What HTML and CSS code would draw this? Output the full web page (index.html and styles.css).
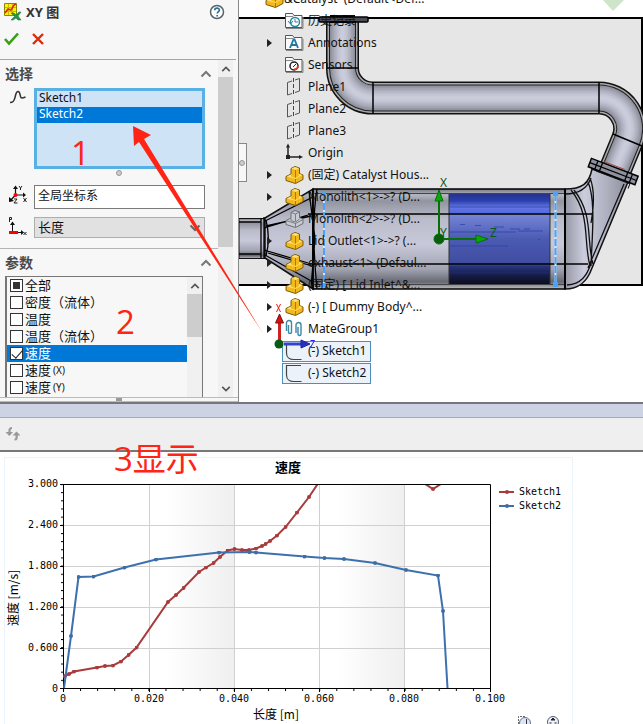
FILE: index.html
```html
<!DOCTYPE html>
<html lang="zh-CN">
<head>
<meta charset="utf-8">
<title>XY 图</title>
<link rel="stylesheet" href="styles.css">
</head>
<body>
<svg class="defs" aria-hidden="true">
  <symbol id="part" viewBox="0 0 20 20">
    <path d="M2 11.500 7 9V3.500L11 1.500l4.500 1.500v5.500l3.500 1.500v4.500L11.500 18.500 2 15.500z" fill="#f2b91c" stroke="#7c5a05"/>
    <path d="M7.500 3.500 11 2l4 1.300-3.300 1.800zM2.800 11.500 7 9.500v2l4 1.500 4-2v-2l3.500 1-7 3.800z" fill="#ffe07a"/>
    <path d="M11.500 5v7.500M11.500 14v4" fill="none" stroke="#a87a09"/>
  </symbol>
  <symbol id="ghost" viewBox="0 0 20 20">
    <path d="M2 11.500 7 9V3.500L11 1.500l4.500 1.500v5.500l3.500 1.500v4.500L11.500 18.500 2 15.500z" fill="#c9cbd2" stroke="#6d6f74"/>
    <path d="M7 3.500 11.500 5l4-2M11.500 5v7.500M7 9.500v2l4.500 1.500 4-3M2 11.500l9.500 3 7.500-4M11.500 14v4" fill="none" stroke="#7b7d82"/>
  </symbol>
  <symbol id="plane" viewBox="0 0 20 20">
    <path d="M8 4 3.500 5.500V18L8 16.500M11 3l4.500-1.500V14L11 15.500" fill="none" stroke="#555"/>
    <path d="M9.500 1v18" stroke="#444" stroke-dasharray="4 2"/>
  </symbol>
  <symbol id="folder" viewBox="0 0 20 20">
    <path d="M1.500 16.500v-14h7l1.500 2h8v12z" fill="#fafafa" stroke="#555"/>
    <path d="M2 5.500h7l1-1M2 17.500h17V6" fill="none" stroke="#888"/>
  </symbol>
  <symbol id="chev-up" viewBox="0 0 12 8"><path d="M1.500 6.500 6 2l4.500 4.500" fill="none" stroke="currentColor" stroke-width="2"/></symbol>
  <symbol id="chev-down" viewBox="0 0 12 8"><path d="M1.500 1.500 6 6l4.500-4.500" fill="none" stroke="currentColor" stroke-width="2"/></symbol>
</svg>

<div class="app">
  <div class="workspace">
    <aside class="panel">
      <header class="panel-head">
        <div class="title-row">
          <svg width="18" height="18" viewBox="0 0 18 18" aria-hidden="true">
            <path d="M.5.500h12v12H.500z" fill="#fff200" stroke="#8a8a00"/>
            <path d="M4.500 1v11M8.500 1v11M1 4.500h11M1 8.500h11" stroke="#c9bd00"/>
            <path d="m1 10 3-4 3 1 3-5 2-1" fill="none" stroke="#e02020" stroke-width="1.500"/>
            <path d="M7 10h3l2 2 3-3h2l-3 4 3 4h-3l-2-2-3 2H7l4-4z" fill="#1f9a45" stroke="#116b2c" stroke-width=".5"/>
          </svg>
          <h1>XY 图</h1>
          <button class="plain help" aria-label="帮助">
            <svg width="16" height="16" viewBox="0 0 16 16"><circle cx="8" cy="8" r="6.500" fill="#fff" stroke="#5b646c" stroke-width="1.500"/><path d="M5.700 6.300c0-3 4.700-2.900 4.700-.2 0 1.700-2.200 1.700-2.200 3.400M8.200 11v1.500" fill="none" stroke="#26729b" stroke-width="1.700"/></svg>
          </button>
        </div>
        <div class="confirm-row">
          <button class="plain" aria-label="确定"><svg width="15" height="14" viewBox="0 0 15 14"><path d="m1 7 4 4.500L14 1.500" fill="none" stroke="#37a112" stroke-width="2.600"/></svg></button>
          <button class="plain" aria-label="取消"><svg width="12" height="14" viewBox="0 0 12 14"><path d="m1 2 10 10M11 2 1 12" stroke="#dc2a0b" stroke-width="2.400"/></svg></button>
        </div>
      </header>
      <div class="panel-main">
        <div class="groups">
          <section class="group">
            <div class="group-head"><h2>选择</h2><svg class="chev" width="12" height="8"><use href="#chev-up"/></svg></div>
            <div class="field field-list">
              <svg width="18" height="18" viewBox="0 0 18 18" aria-hidden="true"><path d="M1 14.500c3 0 4-1 5-5s1-6 3-6 2 3 2.500 5 1.500 2 5 .5" fill="none" stroke="#333" stroke-width="1.500"/></svg>
              <ul class="selection" role="listbox" aria-label="选择">
                <li role="option">Sketch1</li>
                <li role="option" class="on" aria-selected="true">Sketch2</li>
              </ul>
            </div>
            <div class="grip"><i class="dot"></i></div>
            <div class="field">
              <svg width="20" height="20" viewBox="0 0 20 20" aria-hidden="true"><path d="M7.500 10V2M7.500 10H17M7.500 10 2 16" stroke="#111" stroke-width="1.200"/><path d="m5 4 2.500-3.500L10 4zM15 7.500l3 2.500-3 2.500zM1 12l0 5 5-1z" fill="#111"/><circle cx="7.500" cy="10" r="2" fill="#f00"/><path d="m11 1 1.500 2L14 1M12.500 3v2M15.500 13l3 4M18.500 13l-3 4M6 14h3l-3 4h3.500" fill="none" stroke="#222"/></svg>
              <input class="box" type="text" aria-label="坐标系" value="全局坐标系">
            </div>
            <div class="field field-axis">
              <svg width="20" height="20" viewBox="0 0 20 20" aria-hidden="true"><path d="M4.500 17V7M10 15.500h5" stroke="#111"/><path d="m2 8 2.500-3.500L7 8zM13 13l3 2.500-3 2.500z" fill="#111"/><path d="M1 14h9v3H1z" fill="#f00"/><path d="M1.500 5V.500h2v2h-2M15.500 15l3 3M18.500 15l-3 3" fill="none" stroke="#222"/></svg>
              <div class="select-wrap">
                <select class="box" aria-label="横坐标"><option>长度</option></select>
                <svg class="caret" width="12" height="8"><use href="#chev-down"/></svg>
              </div>
            </div>
          </section>
          <section class="group group-params">
            <div class="group-head"><h2>参数</h2><svg class="chev" width="12" height="8"><use href="#chev-up"/></svg></div>
            <div class="params">
              <div class="checks">
                <label><input type="checkbox" class="mixed">全部</label>
                <label><input type="checkbox">密度（流体）</label>
                <label><input type="checkbox">温度</label>
                <label><input type="checkbox">温度（流体）</label>
                <label class="on"><input type="checkbox" checked>速度</label>
                <label><input type="checkbox">速度<small>(X)</small></label>
                <label><input type="checkbox">速度<small>(Y)</small></label>
              </div>
              <div class="bar"><svg class="bar-btn" width="12" height="8"><use href="#chev-up"/></svg><i class="thumb thumb-short"></i></div>
            </div>
          </section>
        </div>
        <div class="bar"><svg class="bar-btn" width="12" height="8"><use href="#chev-up"/></svg><i class="thumb"></i><svg class="bar-btn bar-end" width="12" height="8"><use href="#chev-down"/></svg></div>
      </div>
      <div class="panel-foot"><i></i></div>
    </aside>

    <main class="viewport">
      <svg class="model" viewBox="239 0 404 402" width="404" height="402" role="img" aria-label="Catalyst">
        <defs>
          <linearGradient id="shell" x2="0" y2="1"><stop offset="0" stop-color="#777984"/><stop offset=".06" stop-color="#b5b7c0"/><stop offset=".12" stop-color="#9294a0"/><stop offset=".3" stop-color="#babcca"/><stop offset=".55" stop-color="#c7c9da"/><stop offset=".8" stop-color="#a2a4b2"/><stop offset=".93" stop-color="#666873"/><stop offset="1" stop-color="#bfc0c6"/></linearGradient>
          <linearGradient id="core" x2="0" y2="1"><stop offset="0" stop-color="#25318a"/><stop offset=".08" stop-color="#2b3fae"/><stop offset=".15" stop-color="#6175e5"/><stop offset=".21" stop-color="#566be0"/><stop offset=".24" stop-color="#7484d6"/><stop offset=".5" stop-color="#4b5bb2"/><stop offset=".78" stop-color="#3f4da0"/><stop offset=".8" stop-color="#27347f"/><stop offset=".9" stop-color="#171c46"/><stop offset="1" stop-color="#0a0c1c"/></linearGradient>
          <linearGradient id="elbow"><stop offset="0" stop-color="#9698a5"/><stop offset=".3" stop-color="#cbccdc"/><stop offset=".6" stop-color="#b4b6c5"/><stop offset="1" stop-color="#8d8f9c"/></linearGradient>
          <path id="run" d="M342.500 20v48a30 30 0 0 0 30 30H599a30.600 30.600 0 0 1 28.300 42.300L613 175"/>
        </defs>
        <path d="M239 18h403v267H239z" fill="#e6e6e6"/>
        <path d="M239 18h403v267H239" fill="none" stroke="#000" stroke-width="2"/>
        <path d="m602-1 11 12 12-12z" fill="#cfe5c9"/>
        <!-- inlet and outlet shells -->
        <path d="M239 218.500h26v40h-26z" fill="url(#shell)" stroke="#111"/>
        <path d="m265 218 48-29v100l-48-31z" fill="url(#shell)" stroke="#111" stroke-width="1.500"/>
        <path d="M565 189c17 0 24-5 27-20l36 13-36 86c-5 14-13 21-27 21z" fill="url(#elbow)" stroke="#111" stroke-width="1.500"/>
        <!-- pipe run: stacked strokes shade the tube -->
        <g fill="none">
          <use href="#run" stroke="#111" stroke-width="33"/>
          <use href="#run" stroke="#a9aaae" stroke-width="30"/>
          <use href="#run" stroke="#222" stroke-width="27"/>
          <use href="#run" stroke="#8b8d99" stroke-width="25"/>
          <use href="#run" stroke="#9698a5" stroke-width="23"/>
          <use href="#run" stroke="#a1a3b0" stroke-width="20"/>
          <use href="#run" stroke="#abadbb" stroke-width="17"/>
          <use href="#run" stroke="#b4b6c5" stroke-width="14"/>
          <use href="#run" stroke="#bcbece" stroke-width="11"/>
          <use href="#run" stroke="#c4c6d6" stroke-width="8"/>
          <use href="#run" stroke="#caccdc" stroke-width="4"/>
        </g>
        <path d="M327 68h31M373 82v32M599 82v31M613 134l29 12" stroke="#000" stroke-width="1.500"/>
        <rect x="319" y="17" width="49" height="5" rx="1" fill="#4c4d57" stroke="#000" stroke-width="1.500"/>
        <path d="M330 16h25M330 22h26" stroke="#000" stroke-width="2"/>
        <g transform="rotate(21 613 172)">
          <path d="M588 167h50v9h-50z" fill="#8f91a1" stroke="#000" stroke-width="1.500"/>
          <path d="M588 171.500h50M595 167v9M600 167v9M627 167v9M632 167v9" stroke="#000" stroke-width="1.300"/>
          <path d="M601 165.500h22" stroke="#9a4a38"/>
          <path d="M597 177h36v5" fill="none" stroke="#111"/>
        </g>
        <path d="m624 184-36 84M590 178c5 12 4 28 1 45M588 182c8 18 4 55 3 84M571 190c20 25 12 50 19 76M574 190c20 25 12 50 19 74M565 194c13 0 22-5 26-16M567 285c14-1 20-9 24-22" fill="none" stroke="#111" stroke-width="1.300"/>
        <!-- body -->
        <path d="M313 189h252v100H313z" fill="url(#shell)" stroke="#000" stroke-width="1.500"/>
        <path d="M449 193.500h101v91H449z" fill="url(#core)" stroke="#333"/>
        <path d="M450 232h66M460 224.500h5M475 225.500h6M494 227h10M510 229h10M524 229h6M518 231h25M450 246h58M507 197h9M538 239.500h2" stroke="#2c3ba5" opacity=".7"/>
        <path d="M450 207h100M450 273h100" stroke="#25328a" opacity=".5"/>
        <path d="M313 193.500h252M313 284.500h252" stroke="#444"/>
        <path d="M308 214h284M308 264h280" stroke="#000" stroke-width="1.500"/>
        <path d="M565 189v100" stroke="#000" stroke-width="2"/>
        <path d="M313 189v100M309 191l6 47-4 50M317 189c-5 30-3 70 0 100M265 221l48-24M265 255l48 27M264 228l44-13M266 226l45-10M264 250l44 13M268 253l44 13M261 218v40M264 217v42M266 220c3 12 3 25 0 36M239 222h22M239 254h22" fill="none" stroke="#000" stroke-width="1.300"/>
        <path d="M324 194v91M555.500 194v91" stroke="#d4e7fa" stroke-width="2"/>
        <path d="M324 194v91M555.500 194v91" stroke="#4aa3fa" stroke-width="2" stroke-dasharray="7 2"/>
        <path d="M322 191h4v5h-4zM553 191h5v5h-5zM322 283h4v4h-4zM553 282h5v5h-5z" fill="#4aa3fa"/>
        <g fill="#0aa80a" stroke="#087008">
          <path d="M439 239v-46M439 239h46" stroke-width="2"/>
          <circle cx="439" cy="239" r="5" fill="#075f0b"/>
          <path d="m435 201 4-11 4 11zM476 235l12 4-12 4z"/>
        </g>
        <g class="axis-name"><text x="440" y="187">X</text><text x="440" y="237">Y</text><text x="490" y="237">Z</text></g>
      </svg>

      <ul class="tree">
        <li class="root"><svg width="20" height="20"><use href="#part"/></svg>&amp;Catalyst&nbsp; (Default&lt;Def...</li>
        <li><i></i><svg width="20" height="20" viewBox="0 0 20 20"><use href="#folder"/><circle cx="11" cy="11" r="4.500" fill="#fff" stroke="#2586a5" stroke-width="1.500"/><path d="M11 8v3h3M4 10l2.500 3L9 10" fill="none" stroke="#2586a5"/></svg>历史记录</li>
        <li><i class="arrow"></i><svg width="20" height="20" viewBox="0 0 20 20"><use href="#folder"/><path d="m6 15 3.500-8.500h1L14 15M7.500 12h5" fill="none" stroke="#2176a0" stroke-width="1.800"/></svg>Annotations</li>
        <li><i></i><svg width="20" height="20" viewBox="0 0 20 20"><use href="#folder"/><circle cx="10" cy="11" r="4" fill="#fff" stroke="#222" stroke-width="1.500"/><path d="m9 12 3-3" stroke="#222"/><path d="M10 14.500a4 4 0 0 0 4-4" fill="none" stroke="#e0431c" stroke-width="2"/></svg>Sensors</li>
        <li><i></i><svg width="20" height="20"><use href="#plane"/></svg>Plane1</li>
        <li><i></i><svg width="20" height="20"><use href="#plane"/></svg>Plane2</li>
        <li><i></i><svg width="20" height="20"><use href="#plane"/></svg>Plane3</li>
        <li><i></i><svg width="20" height="20" viewBox="0 0 20 20"><path d="M4 14V3M4 14h12" stroke="#222" stroke-width="1.500"/><path d="M2 4.500 4 .500l2 4zM15 12l4 2-4 2zM2 12h4v4H2z" fill="#222"/></svg>Origin</li>
        <li><i class="arrow"></i><svg width="20" height="20"><use href="#part"/></svg>(固定) Catalyst Hous...</li>
        <li><i class="arrow"></i><svg width="20" height="20"><use href="#part"/></svg>Monolith&lt;1&gt;-&gt;? (D...</li>
        <li><i></i><svg width="20" height="20"><use href="#ghost"/></svg>Monolith&lt;2&gt;-&gt;? (D...</li>
        <li><i class="arrow"></i><svg width="20" height="20"><use href="#part"/></svg>Lid Outlet&lt;1&gt;-&gt;? (...</li>
        <li><i class="arrow"></i><svg width="20" height="20"><use href="#part"/></svg>exhaust&lt;1&gt; (Defaul...</li>
        <li><i class="arrow"></i><svg width="20" height="20"><use href="#part"/></svg>(固定) [ Lid Inlet^&amp;...</li>
        <li><i class="arrow"></i><svg width="20" height="20"><use href="#part"/></svg>(-) [ Dummy Body^...</li>
        <li><i class="arrow"></i><svg width="20" height="20" viewBox="0 0 20 20"><path d="M2.500 12V4a2.500 2.500 0 0 1 5 0v9a1.500 1.500 0 0 1-3 0V6M12 14V6a2.500 2.500 0 0 1 5 0v9a1.500 1.500 0 0 1-3 0V8" fill="none" stroke="#3d87a8" stroke-width="1.400"/></svg>MateGroup1</li>
        <li><i></i><span class="picked"><svg width="20" height="20" viewBox="0 0 20 20"><path d="M17 2.500H2.500V12c0 4 3 6.500 7 6.500h8" fill="none" stroke="#444" stroke-width="1.200"/></svg>(-) Sketch1</span></li>
        <li><i></i><span class="picked"><svg width="20" height="20" viewBox="0 0 20 20"><path d="M17 2.500H2.500V12c0 4 3 6.500 7 6.500h8" fill="none" stroke="#444" stroke-width="1.200"/></svg>(-) Sketch2</span></li>
      </ul>

      <svg class="triad" viewBox="270 300 50 52" width="50" height="52" aria-hidden="true">
        <path d="M279.500 340v-24" stroke="#c22" stroke-width="3"/><path d="m275.500 323 4-9 4 9z" fill="#d11515" stroke="#811"/>
        <path d="M284 344h20" stroke="#3344c8" stroke-width="3"/><path d="m301 340 9 4-9 4z" fill="#2233c4" stroke="#229"/>
        <circle cx="279" cy="344" r="4.500" fill="#0a5a14"/>
        <path d="m276.500 304 4 8M280.500 304l-4 8" stroke="#f01818"/><path d="M310.500 340.500h4l-4 7h4.500" fill="none" stroke="#22f"/>
      </svg>
      <button class="collapse" aria-label="折叠面板"><i class="dot"></i></button>
    </main>
  </div>

  <div class="splitter"></div>
  <div class="toolbar">
    <button class="plain" aria-label="刷新"><svg width="16" height="16" viewBox="0 0 16 16"><path d="M7 2C4 2 4.500 4 4.500 8M9.500 13.500c3 0 2-2 2-6" fill="none" stroke="#999" stroke-width="2.200"/><path d="M.5 6h7.500l-3.700 4zM7.500 9.500l4-4 4 4z" fill="#999"/></svg></button>
  </div>
  <section class="plot">
    <div class="chart">
      <svg viewBox="5 458 567 270" width="567" height="270" role="img" aria-label="速度">
        <defs>
          <linearGradient id="band"><stop offset="0" stop-color="#fff"/><stop offset=".2" stop-color="#fff"/><stop offset="1" stop-color="#efefef"/></linearGradient>
          <clipPath id="area"><path d="M63 485h428v204H63z"/></clipPath>
          <marker id="dot-r" markerWidth="4" markerHeight="4" refX="2" refY="2" markerUnits="userSpaceOnUse"><circle cx="2" cy="2" r="2" fill="#a83c3c"/></marker>
          <marker id="dot-b" markerWidth="4" markerHeight="4" refX="2" refY="2" markerUnits="userSpaceOnUse"><circle cx="2" cy="2" r="2" fill="#3d6ca8"/></marker>
          <pattern id="minor-x" x="63" y="689" width="17.080" height="3" patternUnits="userSpaceOnUse"><path d="M0 0h1v3H0z"/></pattern>
          <pattern id="minor-y" x="61" y="484" width="3" height="8.160" patternUnits="userSpaceOnUse"><path d="M0 0h3v1H0z"/></pattern>
        </defs>
        <path d="M149 485h86v203h-86z" fill="url(#band)"/>
        <path d="M320 485h85v203h-85z" fill="url(#band)"/>
        <path d="M64 525.500h426M64 566.500h426M64 607.500h426M64 648.500h426M149.500 485v203M234.500 485v203M319.500 485v203M404.500 485v203" stroke="#d0d0d0"/>
        <path d="M63 689h428v2H63z" fill="url(#minor-x)"/>
        <path d="M61 484h3v205h-3z" fill="url(#minor-y)"/>
        <path d="M63.500 484.500h427v204h-427zM60 484.500h4M60 525.500h4M60 566.500h4M60 607.500h4M60 648.500h4M60 688.500h4M63.500 688v4M149.500 688v4M234.500 688v4M319.500 688v4M404.500 688v4M490.500 688v4" fill="none" stroke="#000"/>
        <g clip-path="url(#area)" fill="none" stroke-width="2">
          <path d="M64 678 65 676 69 674 74 671.500 97 667.500 105 666 113 665.500 121 661.500 128.500 655 136.500 647.500 168 602 176 595 183.500 588 199 572 206 567.500 213.500 563 220 557 227.500 550.500 234.500 549 242 550 249 550 256 548.500 262 546 265.500 544 270 541 277 535.500 285.500 527 297 512.500 309 497 319 482M422 482 433 489 444 482" stroke="#a83c3c" marker-mid="url(#dot-r)"/>
          <path d="M64 688 71 636 78.500 577 93.500 576.500 124.500 567.500 156 559.500 219 552.500 249.500 552 256 552.500 304.500 556.500 324.500 558 344 559 375 563 406 570 438 575.500 443 611 447.500 688" stroke="#3d70ad" marker-mid="url(#dot-b)"/>
        </g>
        <g stroke-width="2"><path d="M499 492h15" stroke="#a83c3c"/><circle cx="507" cy="492" r="2" fill="#a83c3c"/><path d="M499 506h15" stroke="#3d70ad"/><circle cx="507" cy="506" r="2" fill="#3d6ca8"/></g>
        <g class="tick"><text x="519" y="495">Sketch1</text><text x="519" y="509">Sketch2</text></g>
        <g class="tick end"><text x="58" y="487">3.000</text><text x="58" y="528">2.400</text><text x="58" y="569">1.800</text><text x="58" y="610">1.200</text><text x="58" y="651">0.600</text><text x="58" y="692">0</text></g>
        <g class="tick mid"><text x="63" y="702">0</text><text x="149" y="702">0.020</text><text x="234" y="702">0.040</text><text x="319" y="702">0.060</text><text x="404" y="702">0.080</text><text x="490" y="702">0.100</text></g>
        <text class="chart-title" x="288" y="472">速度</text>
        <text class="axis-title" x="276" y="719">长度 [m]</text>
        <text class="axis-title" transform="translate(18 598) rotate(-90)">速度 [m/s]</text>
        <path d="M518.500 724v-7.500h7" fill="none" stroke="#666" stroke-dasharray="2 1"/>
        <circle cx="525" cy="723" r="5.500" fill="#dce5f2" stroke="#6b7688"/><path d="M526.500 719v5" stroke="#334"/>
        <circle cx="553" cy="722" r="5.500" fill="#eef1f7" stroke="#555c6c"/><path d="m551 720 2-2 2 2zM549.500 723h2M554.500 723h2" fill="#223" stroke="#223"/>
      </svg>
    </div>
  </section>

  <svg class="pointer" viewBox="130 120 140 220" width="140" height="220" aria-hidden="true"><path d="m133 126 18 9-7 4 119 194.500L139 142l-5 4z" fill="#ff2414"/></svg>
  <span class="note note-1">1</span>
  <span class="note note-2">2</span>
  <span class="note note-3">3显示</span>
</div>
</body>
</html>
```
FILE: styles.css
```css
* { box-sizing: border-box; }
body {
  margin: 0;
  background: #fff;
  color: #111;
  font: 12px/16px "Noto Sans", "Noto Sans CJK SC", sans-serif;
}
h1, h2, ul { margin: 0; padding: 0; }
ul { list-style: none; }
svg { display: block; flex: none; }
.defs { position: absolute; width: 0; height: 0; }
button { font: inherit; cursor: pointer; }
.plain { display: block; padding: 0; border: 0; background: none; }

.app {
  position: relative;
  display: flex;
  flex-direction: column;
  height: 100vh;
  overflow: hidden;
}
.workspace { display: flex; flex: none; height: 402px; }

/* property panel */
.panel {
  display: flex;
  flex-direction: column;
  flex: none;
  width: 238px;
  background: #f7f7f7;
}
.panel-head {
  height: 60px;
  margin-right: 2px;
  padding: 3px 11px 0 4px;
  border-bottom: 1px solid #a6a6a6;
}
.title-row { display: flex; align-items: center; gap: 4px; height: 18px; }
.title-row h1 { font-size: 13px; line-height: 18px; color: #333; }
.help { margin-left: auto; }
.confirm-row { display: flex; gap: 13px; margin-top: 11px; }

.panel-main { display: flex; flex: 1; min-height: 0; }
.groups { flex: 1; min-width: 0; }
.group { padding: 5px 13px 0 5px; }
.group-head {
  display: flex;
  align-items: center;
  justify-content: space-between;
  height: 18px;
}
.group-head h2 { font-size: 14px; line-height: 18px; color: #4a4a4a; }
.chev { margin-right: -7px; color: #777; }
.field { display: flex; gap: 6px; padding-left: 3px; }
.field > svg { width: 20px; }
.field-list { padding-top: 5px; }
.selection {
  flex: 1;
  height: 81px;
  border: 3px solid #58b0e4;
  background: #cfe3f7;
}
.selection li { height: 16px; padding-left: 2px; line-height: 14px; }
.selection .on { background: #0078d7; color: #fff; }
.grip { display: flex; justify-content: center; padding: 1px 0 9px 28px; }
.dot {
  width: 6px;
  height: 6px;
  border: 1px solid #999;
  border-radius: 50%;
  background: #ccc;
}
.box {
  width: 100%;
  padding: 0 3px;
  border: 1px solid #7a7a7a;
  border-radius: 0;
  background: #fff;
  color: #111;
  font: 12px/16px "Noto Sans", "Noto Sans CJK SC", sans-serif;
}
input.box { height: 24px; padding-bottom: 4px; }
.field-axis { padding-top: 8px; }
.select-wrap { position: relative; flex: 1; }
select.box {
  display: block;
  height: 21px;
  border-color: #adadad;
  background: #e1e1e1;
  font-size: 13px;
  line-height: 17px;
  appearance: none;
}
.caret { position: absolute; right: 4px; top: 7px; color: #666; }

.group-params { margin-top: 10px; border-top: 1px solid #b4b4b4; }
.params {
  display: flex;
  height: 121px;
  margin: 4px 2px 0 0;
  overflow: hidden;
  border: 1px solid #777;
  border-width: 1px 1px 0 2px;
}
.checks { flex: 1; }
.checks label {
  display: flex;
  align-items: center;
  gap: 2px;
  height: 17px;
  padding-left: 3px;
  font-size: 13px;
  line-height: 17px;
  white-space: nowrap;
}
.checks small { font-size: 10px; }
.checks .on { background: #0078d7; color: #fff; }
.checks input {
  position: relative;
  flex: none;
  width: 13px;
  height: 13px;
  margin: 0;
  border: 1px solid #333;
  background: #fff;
  appearance: none;
}
.checks input:checked::after {
  content: "";
  position: absolute;
  left: 3px;
  top: 0;
  width: 5px;
  height: 9px;
  border: solid #222;
  border-width: 0 1px 1px 0;
  rotate: 42deg;
}
.checks .mixed::after {
  content: "";
  position: absolute;
  inset: 2px;
  background: #333;
}
.bar {
  display: flex;
  flex-direction: column;
  align-items: center;
  flex: none;
  width: 15px;
  background: #f0f0f0;
  color: #555;
}
.panel-main > .bar { margin-right: 5px; }
.bar-btn { width: 10px; margin: 5px 0 4px; }
.bar-end { margin-top: auto; }
.thumb { width: 15px; height: 170px; background: #cdcdcd; }
.thumb-short { height: 43px; }
.panel-foot {
  height: 5px;
  border-top: 1px solid #bbb;
  border-bottom: 1px solid #bbb;
}
.panel-foot i { display: block; width: 6px; height: 3px; margin: 0 auto; background: #999; }

/* graphics area */
.viewport {
  position: relative;
  flex: 1;
  overflow: hidden;
  border-left: 1px solid #888;
  background: #fff;
}
.model { position: absolute; left: 0; top: 0; }
.axis-name { fill: #0b5a12; font: 12px "Noto Sans", sans-serif; }
.tree {
  position: relative;
  margin-top: -12px;
  padding-left: 28px;
  font: 12px/22px "Noto Sans", "Noto Sans CJK SC", sans-serif;
}
.tree li { display: flex; align-items: center; height: 22px; white-space: nowrap; }
.tree li svg { margin-right: 4px; }
.tree .root svg { margin: 0 0 0 -3px; }
.tree i { flex: none; width: 17px; }
.arrow::before {
  content: "";
  display: block;
  width: 0;
  border: solid transparent;
  border-width: 4px 0 4px 5px;
  border-left-color: #222;
}
.picked {
  display: flex;
  align-items: center;
  height: 21px;
  margin-left: -2px;
  padding: 0 4px 0 1px;
  border: 1px solid #4b8fbd;
  background: #ebf2f9;
}
.triad { position: absolute; left: 31px; top: 300px; }
.collapse {
  position: absolute;
  left: -1px;
  top: 143px;
  display: flex;
  align-items: center;
  justify-content: center;
  width: 9px;
  height: 39px;
  padding: 0;
  border: 1px solid #888;
  border-left: 0;
  background: #f7f7f7;
}
.collapse .dot { flex: none; }

/* results area */
.splitter {
  flex: none;
  height: 16px;
  border-top: 2px solid #777;
  border-bottom: 1px solid #a7a9b5;
  background: #cdd2e5;
}
.toolbar {
  flex: none;
  height: 34px;
  padding: 8px 5px;
  border-bottom: 2px solid #777;
  background: #efefef;
}
.plot { flex: 1; min-height: 0; padding: 5px 4px 0; overflow: hidden; }
.chart { width: fit-content; border: 1px solid #e9f3fb; border-bottom: 0; }
.tick { font: 10px "DejaVu Sans Mono", monospace; }
.end { text-anchor: end; }
.mid { text-anchor: middle; }
.chart-title { font: bold 13px "Noto Sans CJK SC", sans-serif; text-anchor: middle; }
.axis-title { font: 12px "Noto Sans CJK SC", sans-serif; text-anchor: middle; }

/* annotations drawn over the window */
.pointer { position: absolute; left: 130px; top: 120px; pointer-events: none; }
.note {
  position: absolute;
  color: #ff2414;
  font: 33px/40px "Open Sans", "Noto Sans CJK SC", sans-serif;
}
.note-1 { left: 71px; top: 133px; }
.note-2 { left: 116px; top: 302px; }
.note-3 { left: 114px; top: 439px; }
```
